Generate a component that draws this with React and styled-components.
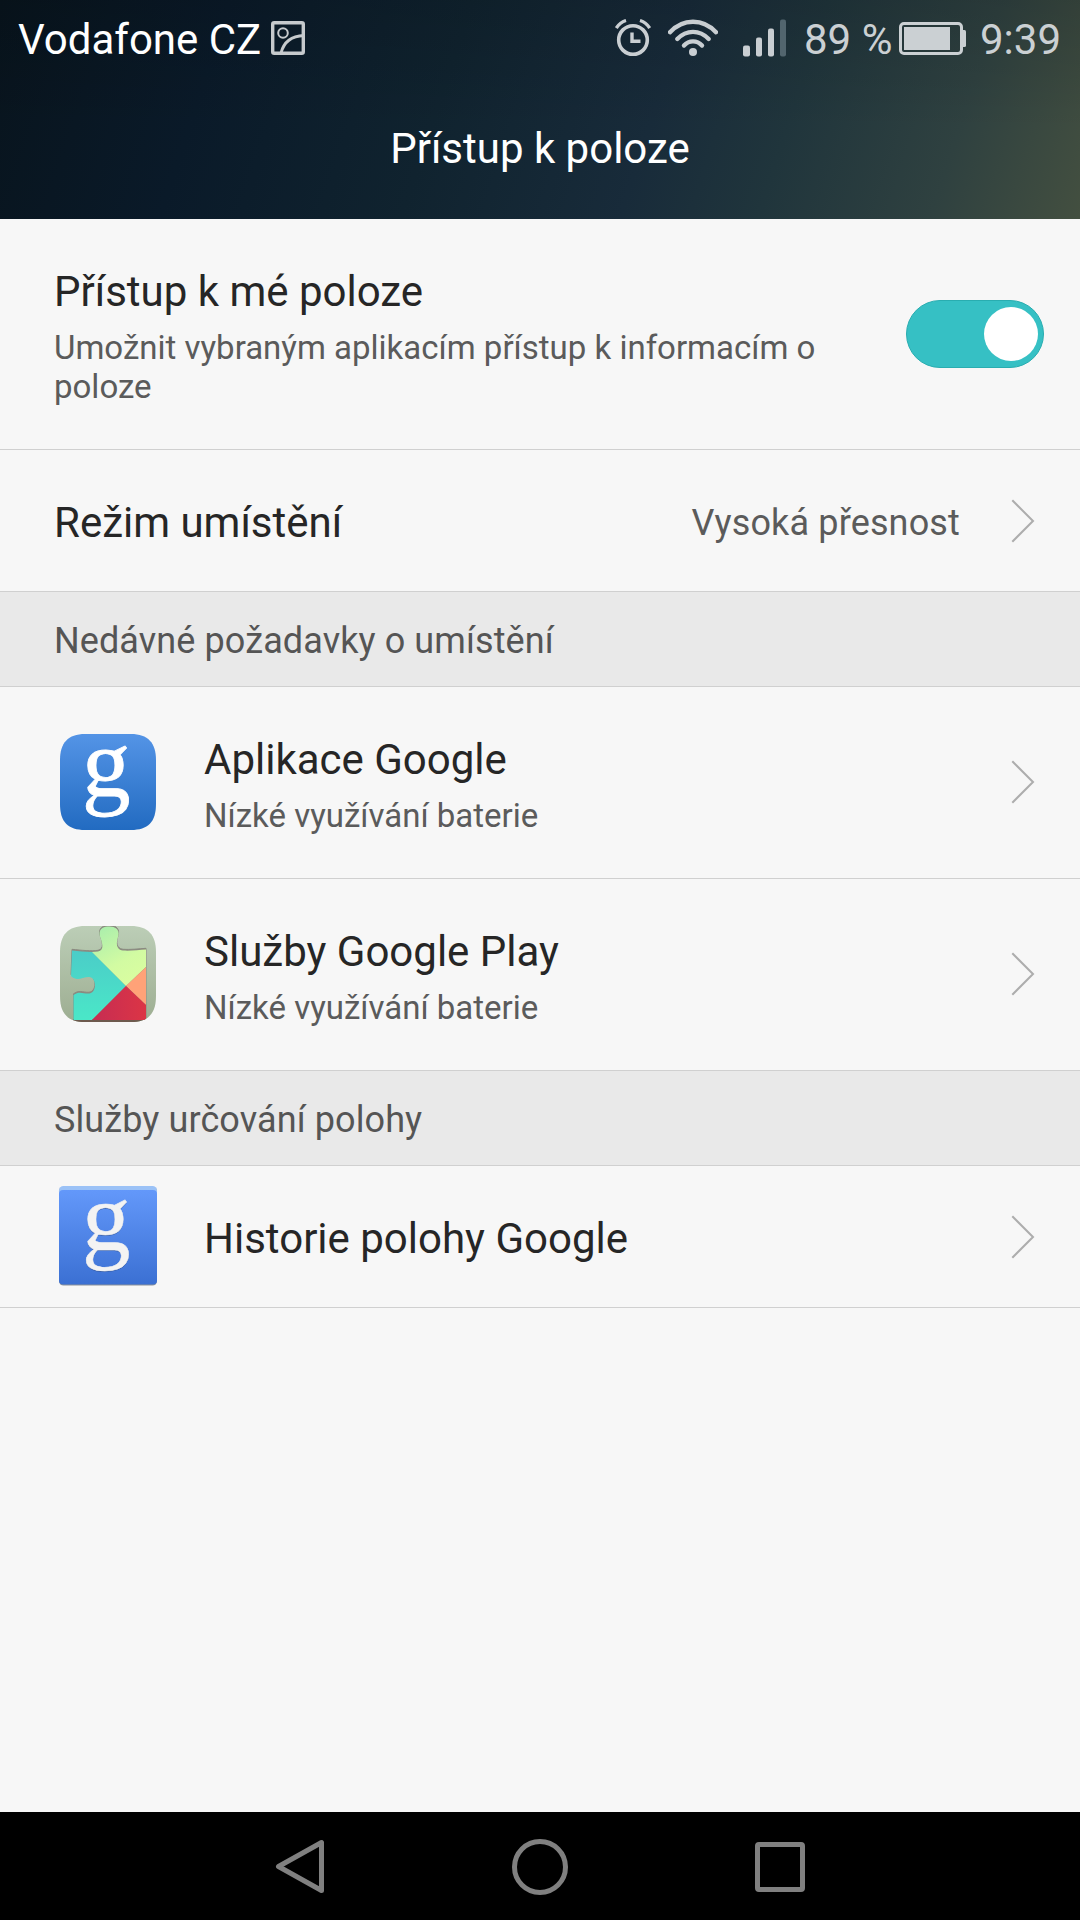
import React from 'react';
import styled, { createGlobalStyle } from 'styled-components';

const GlobalStyle = createGlobalStyle`
  * {
    box-sizing: border-box;
  }
  body {
    margin: 0;
    background: #f7f7f7;
    font-family: Roboto, 'Noto Sans', sans-serif;
  }
  svg {
    display: block;
    flex: none;
  }
`;

const Screen = styled.div`
  width: 1080px;
  height: 1920px;
  display: flex;
  flex-direction: column;
  background: #f7f7f7;
  overflow: hidden;
`;

const Header = styled.header`
  height: 219px;
  flex: none;
  background:
    linear-gradient(180deg, rgba(0, 0, 0, 0.12) 0, rgba(0, 0, 0, 0) 130px),
    linear-gradient(108deg, #08141d 0%, #0a1a29 20%, #10232f 41%, #182b3a 60%, #20353c 72%, #2f4140 87%, #434f40 100%);
`;

const StatusBar = styled.div`
  height: 75px;
  display: flex;
  align-items: center;
  justify-content: space-between;
  padding: 0 19px 0 18px;
`;

const StatusGroup = styled.div`
  display: flex;
  align-items: center;
`;

const StatusText = styled.span`
  font-size: 42px;
  line-height: 50px;
  padding-top: 5px;
  white-space: pre;
  color: ${(props) => (props.$bright ? '#ffffff' : '#cbd0d3')};
`;

const Carrier = styled(StatusText)`
  width: 253px;
`;

const Percent = styled(StatusText)`
  width: 95px;
`;

const AlarmSvg = styled.svg`
  margin-right: 17px;
`;

const WifiSvg = styled.svg`
  margin-right: 25px;
`;

const SignalSvg = styled.svg`
  margin-right: 18px;
`;

const BatterySvg = styled.svg`
  margin: 2px 14px 0 0;
`;

const PageTitle = styled.h1`
  margin: 49px 0 0;
  text-align: center;
  font-size: 42px;
  line-height: 50px;
  font-weight: 400;
  color: #ffffff;
`;

const List = styled.main`
  flex: 1;
`;

const Row = styled.div`
  display: flex;
  align-items: center;
  height: ${(props) => props.$height}px;
  padding: 0 45px 0 54px;
  border-bottom: 1px solid #d0d0d0;
`;

const SwitchRow = styled(Row)`
  padding-right: 36px;
`;

const AppRow = styled(Row)`
  padding-bottom: 2px;
`;

const SectionHeader = styled.h2`
  display: flex;
  align-items: center;
  height: 95px;
  margin: 0;
  padding: 3px 54px 0;
  border-bottom: 1px solid #d0d0d0;
  background: #e9e9e9;
  font-size: 36px;
  letter-spacing: 0.1px;
  font-weight: 400;
  color: #555555;
`;

const TextBlock = styled.div`
  flex: 1;
  padding-top: ${(props) => props.$shift || 0}px;
`;

const Title = styled.div`
  font-size: 42px;
  line-height: 50px;
  color: #262626;
`;

const Summary = styled.div`
  max-width: 780px;
  margin-top: 11px;
  font-size: 33px;
  line-height: 39px;
  color: #5b5b5b;
`;

const Value = styled.span`
  margin-right: 51px;
  padding-top: 4px;
  font-size: 36px;
  letter-spacing: 0.15px;
  line-height: 42px;
  color: #5b5b5b;
`;

const AppIcon = styled.svg`
  margin: 0 45px ${(props) => props.$lift || 0}px 1px;
  overflow: visible;
`;

const LogoLetter = styled.text`
  font-family: 'Liberation Serif', serif;
  font-size: 97px;
`;

const Switch = styled.div`
  display: flex;
  align-items: center;
  justify-content: flex-end;
  width: 138px;
  height: 68px;
  padding-right: 5px;
  border: 1px solid #29adb0;
  border-radius: 34px;
  background: #36c0c4;
`;

const Knob = styled.div`
  width: 54px;
  height: 54px;
  border-radius: 50%;
  background: #ffffff;
`;

const NavBar = styled.nav`
  display: flex;
  align-items: center;
  justify-content: center;
  gap: 184px;
  height: 108px;
  flex: none;
  padding-top: 2px;
  background: #000000;
`;

const ImageIcon = () => (
  <svg width="34" height="34" viewBox="0 0 34 34" fill="none" stroke="#c6cacd">
    <rect x="1.7" y="1.7" width="30.6" height="30.6" rx="1.5" strokeWidth="3.4" />
    <circle cx="12" cy="12" r="4.8" strokeWidth="2" />
    <path d="M10 32C12.500 22 20 15 33 14.500" strokeWidth="3" />
  </svg>
);

const AlarmIcon = () => (
  <AlarmSvg width="36" height="38" viewBox="0 0 36 38" fill="none" stroke="#c9ced2">
    <circle cx="18" cy="21" r="14.300" strokeWidth="3.600" />
    <path d="M17 13.500v8.700h8.500" strokeWidth="3.400" />
    <path d="M1.300 9C3.500 5.700 7 2.700 11 1.500M34.700 9C32.500 5.700 29 2.700 25 1.500" strokeWidth="3.300" />
  </AlarmSvg>
);

const WifiIcon = () => (
  <WifiSvg width="50" height="38" viewBox="0 0 50 38" fill="none" stroke="#c9ced2" strokeLinecap="round">
    <path d="M2 13.200C15-.8 35-.8 48 13.200" strokeWidth="4.400" />
    <path d="M9.300 20C18.500 10.500 31.500 10.500 40.700 20" strokeWidth="4.400" />
    <path d="M16 26.500C21 21 29 21 34 26.500" strokeWidth="4.400" />
    <circle cx="25" cy="33" r="4" fill="#c9ced2" stroke="none" />
  </WifiSvg>
);

const SignalIcon = () => (
  <SignalSvg width="43" height="38" viewBox="0 0 43 38" fill="#c9ced2">
    <rect x="0" y="26.500" width="7" height="11" rx="2" />
    <rect x="13" y="18.500" width="6" height="19" rx="2" />
    <rect x="25" y="9.500" width="6" height="28" rx="2" />
    <rect x="37" y="0.500" width="6" height="37" rx="2" fill="#52656e" />
  </SignalSvg>
);

const BatteryIcon = () => (
  <BatterySvg width="67" height="33" viewBox="0 0 67 33">
    <rect x="1.500" y="1.500" width="61" height="30" rx="3.500" fill="none" stroke="#cbd0d3" strokeWidth="3" />
    <rect x="5" y="5" width="46" height="23" fill="#cbd0d3" />
    <path d="M63 8h2.500q1.500 0 1.500 1.500v14q0 1.500-1.500 1.500H63z" fill="#cbd0d3" />
  </BatterySvg>
);

const ChevronIcon = () => (
  <svg width="24" height="44" viewBox="0 0 24 44" fill="none" stroke="#adadad" strokeWidth="2">
    <path d="M1.300 1.300L22 22L1.300 42.700" />
  </svg>
);

const tilePath = 'M30 4H76C93 4 101 13 101 30V74C101 92 93 100 76 100H30C13 100 5 92 5 74V30C5 13 13 4 30 4z';

const puzzlePath =
  'M17 28.500C26 29.500 37 30.500 43 29.500C50 28 47 20 45 14.500C43 7 48 4.500 54.500 4.500C62 4.500 65 9 63 15C61 21 61 27.500 68 28.500C75 29 84 28 91 27.500V98H18.500V73C25 68 30 73 36 71C42 68 41 55 34 55C27 55 22 60 16 54z';

const GoogleAppIcon = () => (
  <AppIcon width="104" height="104" viewBox="0 0 104 104">
    <defs>
      <linearGradient id="appBlue" x1="0" y1="0" x2="0" y2="1">
        <stop offset="0" stopColor="#5494e6" />
        <stop offset="1" stopColor="#226bc1" />
      </linearGradient>
    </defs>
    <path d={tilePath} fill="url(#appBlue)" />
    <LogoLetter x="27" y="66" fill="#ffffff" stroke="#ffffff" strokeWidth="0.8">g</LogoLetter>
  </AppIcon>
);

const PlayServicesIcon = () => (
  <AppIcon width="104" height="104" viewBox="0 0 104 104">
    <defs>
      <linearGradient id="sage" x1="0" y1="0" x2="0" y2="1">
        <stop offset="0" stopColor="#bdcfb8" />
        <stop offset="1" stopColor="#9cac90" />
      </linearGradient>
      <linearGradient id="teal" x1="0" y1="0" x2="0" y2="1">
        <stop offset="0" stopColor="#4bc4c8" />
        <stop offset="1" stopColor="#4ae8c8" />
      </linearGradient>
      <linearGradient id="lime" x1="0" y1="0" x2="0.500" y2="1">
        <stop offset="0" stopColor="#a4ecae" />
        <stop offset="0.700" stopColor="#d2fba2" />
        <stop offset="1" stopColor="#d8fda0" />
      </linearGradient>
      <linearGradient id="red" x1="0" y1="0" x2="1" y2="0">
        <stop offset="0" stopColor="#c52c53" />
        <stop offset="1" stopColor="#dc3545" />
      </linearGradient>
      <clipPath id="tile">
        <path d={tilePath} />
      </clipPath>
      <clipPath id="puzzle">
        <path d={puzzlePath} />
      </clipPath>
    </defs>
    <g clipPath="url(#tile)">
      <rect width="104" height="104" fill="url(#sage)" />
      <path d={puzzlePath} transform="translate(0 -1.200)" fill="#8b8a80" stroke="#8b8a80" strokeWidth="1" />
      <rect x="18" y="97" width="73" height="3" fill="#6d5a4e" />
      <g clipPath="url(#puzzle)">
        <path d="M14 6L71 64L35 100H14z" fill="url(#teal)" />
        <path d="M37 30V2H92V44L71 64z" fill="url(#lime)" />
        <path d="M92 44L71 64L92 84z" fill="#ffa278" />
        <path d="M71 64L92 84V100H35z" fill="url(#red)" />
      </g>
    </g>
  </AppIcon>
);

const LocationHistoryIcon = () => (
  <AppIcon $lift={3} width="104" height="104" viewBox="0 0 104 104">
    <defs>
      <linearGradient id="historyBlue" x1="0" y1="0" x2="0" y2="1">
        <stop offset="0" stopColor="#6398fa" />
        <stop offset="1" stopColor="#3b70d3" />
      </linearGradient>
    </defs>
    <rect x="4" y="4" width="98" height="98.500" rx="4.500" fill="#8c9299" />
    <rect x="4" y="3" width="98" height="97" rx="4.500" fill="#9bc2f7" />
    <rect x="4" y="7" width="98" height="94.500" rx="4" fill="url(#historyBlue)" />
    <LogoLetter x="27" y="67.500" fill="#3c63ac" aria-hidden="true">g</LogoLetter>
    <LogoLetter x="27" y="66.500" fill="#f3f3f3" stroke="#f3f3f3" strokeWidth="0.5">g</LogoLetter>
  </AppIcon>
);

const BackIcon = () => (
  <svg width="56" height="56" viewBox="0 0 56 56" fill="none" stroke="#808080" strokeWidth="5" strokeLinejoin="round">
    <path d="M49.500 3.500V51.500L6.500 27.500z" />
  </svg>
);

const HomeIcon = () => (
  <svg width="56" height="56" viewBox="0 0 56 56" fill="none" stroke="#808080" strokeWidth="5">
    <circle cx="28" cy="28" r="25.500" />
  </svg>
);

const RecentsIcon = () => (
  <svg width="56" height="56" viewBox="0 0 56 56" fill="none" stroke="#808080" strokeWidth="5">
    <rect x="5.500" y="5.500" width="45" height="45" rx="1.500" />
  </svg>
);

const recentRequests = [
  { title: 'Aplikace Google', summary: 'Nízké využívání baterie', Icon: GoogleAppIcon },
  { title: 'Služby Google Play', summary: 'Nízké využívání baterie', Icon: PlayServicesIcon },
];

export default function App() {
  return (
    <Screen>
      <GlobalStyle />
      <Header>
        <StatusBar>
          <StatusGroup>
            <Carrier $bright>Vodafone CZ</Carrier>
            <ImageIcon />
          </StatusGroup>
          <StatusGroup>
            <AlarmIcon />
            <WifiIcon />
            <SignalIcon />
            <Percent>89 %</Percent>
            <BatteryIcon />
            <StatusText>9:39</StatusText>
          </StatusGroup>
        </StatusBar>
        <PageTitle>Přístup k poloze</PageTitle>
      </Header>

      <List>
        <SwitchRow $height={231}>
          <TextBlock $shift={5}>
            <Title>Přístup k mé poloze</Title>
            <Summary>Umožnit vybraným aplikacím přístup k informacím o poloze</Summary>
          </TextBlock>
          <Switch role="switch" aria-checked="true">
            <Knob />
          </Switch>
        </SwitchRow>
        <Row $height={142}>
          <TextBlock $shift={4}>
            <Title>Režim umístění</Title>
          </TextBlock>
          <Value>Vysoká přesnost</Value>
          <ChevronIcon />
        </Row>

        <SectionHeader>Nedávné požadavky o umístění</SectionHeader>
        {recentRequests.map(({ title, summary, Icon }) => (
          <AppRow $height={192} key={title}>
            <Icon />
            <TextBlock $shift={7}>
              <Title>{title}</Title>
              <Summary>{summary}</Summary>
            </TextBlock>
            <ChevronIcon />
          </AppRow>
        ))}

        <SectionHeader>Služby určování polohy</SectionHeader>
        <Row $height={142}>
          <LocationHistoryIcon />
          <TextBlock $shift={4}>
            <Title>Historie polohy Google</Title>
          </TextBlock>
          <ChevronIcon />
        </Row>
      </List>

      <NavBar>
        <BackIcon />
        <HomeIcon />
        <RecentsIcon />
      </NavBar>
    </Screen>
  );
}
